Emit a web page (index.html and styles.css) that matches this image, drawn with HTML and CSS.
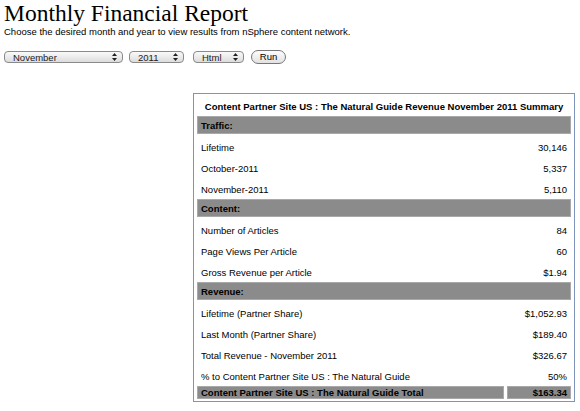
FILE: index.html
```html
<!DOCTYPE html>
<html lang="en">
<head>
  <meta charset="UTF-8" />
  <title>Monthly Financial Report</title>
  <link rel="stylesheet" href="styles.css">
</head>
<body>
  <h1>Monthly Financial Report</h1>
  <p class="intro">Choose the desired month and year to view results from nSphere content network.</p>

  <div class="controls">
    <span class="select month">November
      <svg class="arrows" width="5" height="8" viewBox="0 0 5 8"><path d="M0 3 L2.5 0 L5 3 Z M0 5 L2.5 8 L5 5 Z" fill="#222"/></svg>
    </span>
    <span class="select year">2011
      <svg class="arrows" width="5" height="8" viewBox="0 0 5 8"><path d="M0 3 L2.5 0 L5 3 Z M0 5 L2.5 8 L5 5 Z" fill="#222"/></svg>
    </span>
    <span class="select format">Html
      <svg class="arrows" width="5" height="8" viewBox="0 0 5 8"><path d="M0 3 L2.5 0 L5 3 Z M0 5 L2.5 8 L5 5 Z" fill="#222"/></svg>
    </span>
    <span class="run">Run</span>
  </div>

  <div class="report-wrap">
    <table class="report">
      <tr class="title"><td colspan="2">Content Partner Site US : The Natural Guide Revenue November 2011 Summary</td></tr>

      <tr class="group"><td colspan="2">Traffic:</td></tr>
      <tr><td>Lifetime</td><td class="num">30,146</td></tr>
      <tr><td>October-2011</td><td class="num">5,337</td></tr>
      <tr><td>November-2011</td><td class="num">5,110</td></tr>

      <tr class="group"><td colspan="2">Content:</td></tr>
      <tr><td>Number of Articles</td><td class="num">84</td></tr>
      <tr><td>Page Views Per Article</td><td class="num">60</td></tr>
      <tr><td>Gross Revenue per Article</td><td class="num">$1.94</td></tr>

      <tr class="group"><td colspan="2">Revenue:</td></tr>
      <tr><td>Lifetime (Partner Share)</td><td class="num">$1,052.93</td></tr>
      <tr><td>Last Month (Partner Share)</td><td class="num">$189.40</td></tr>
      <tr><td>Total Revenue - November 2011</td><td class="num">$326.67</td></tr>
      <tr><td>% to Content Partner Site US : The Natural Guide</td><td class="num">50%</td></tr>

      <tr class="total"><td>Content Partner Site US : The Natural Guide Total</td><td class="num">$163.34</td></tr>
    </table>
  </div>
</body>
</html>
```

FILE: styles.css
```css
body {
  margin: 0;
  padding: 0 4px;
  background: #fff;
  color: #000;
  font-family: "Liberation Sans", Arial, sans-serif;
  font-size: 9.5px;
}
h1 {
  font-family: "Liberation Serif", "Times New Roman", serif;
  font-weight: normal;
  font-size: 23.5px;
  margin: 0;
  padding-top: 1px;
  line-height: 24px;
}
.intro {
  margin: 1px 0 0 0;
  line-height: 12px;
}
.controls {
  display: flex;
  align-items: center;
  gap: 6px;
  margin-top: 12px;
  height: 14px;
}
.select {
  display: flex;
  align-items: center;
  justify-content: space-between;
  box-sizing: border-box;
  height: 12px;
  padding: 0 5px 0 8px;
  border: 1px solid #8a8a8a;
  border-radius: 4px;
  background: linear-gradient(#fafafa, #dcdcdc);
  font-size: 9.5px;
  color: #222;
}
.month { width: 119px; }
.year { width: 55px; }
.format { width: 51px; margin-left: 3px; }
.arrows { display: block; }
.run {
  box-sizing: border-box;
  height: 14px;
  width: 35px;
  margin-left: 1px;
  border: 1px solid #777;
  border-radius: 8px;
  background: linear-gradient(#fdfdfd, #e2e2e2);
  text-align: center;
  line-height: 12px;
  font-size: 9.5px;
}
.report-wrap {
  display: flex;
  justify-content: flex-end;
  margin-top: 29px;
  padding-right: 1px;
}
.report {
  width: 382px;
  border: 1px solid #7f94ba;
  border-spacing: 3px 2px;
  padding: 0;
}
.report td {
  height: 16px;
  padding: 3px 4px 0 4px;
  white-space: nowrap;
}
.report .num {
  text-align: right;
  width: 56px;
}
.title td {
  text-align: center;
  font-weight: bold;
  height: 16px;
  padding-top: 2px;
}
.group td,
.total td {
  height: 15px;
  font-weight: bold;
  background: #8b8b8b;
  border: 1px solid #a9a9a9;
  padding: 1px 3px 0 3px;
}
.total td {
  height: 11px;
  padding-top: 0;
}
```
